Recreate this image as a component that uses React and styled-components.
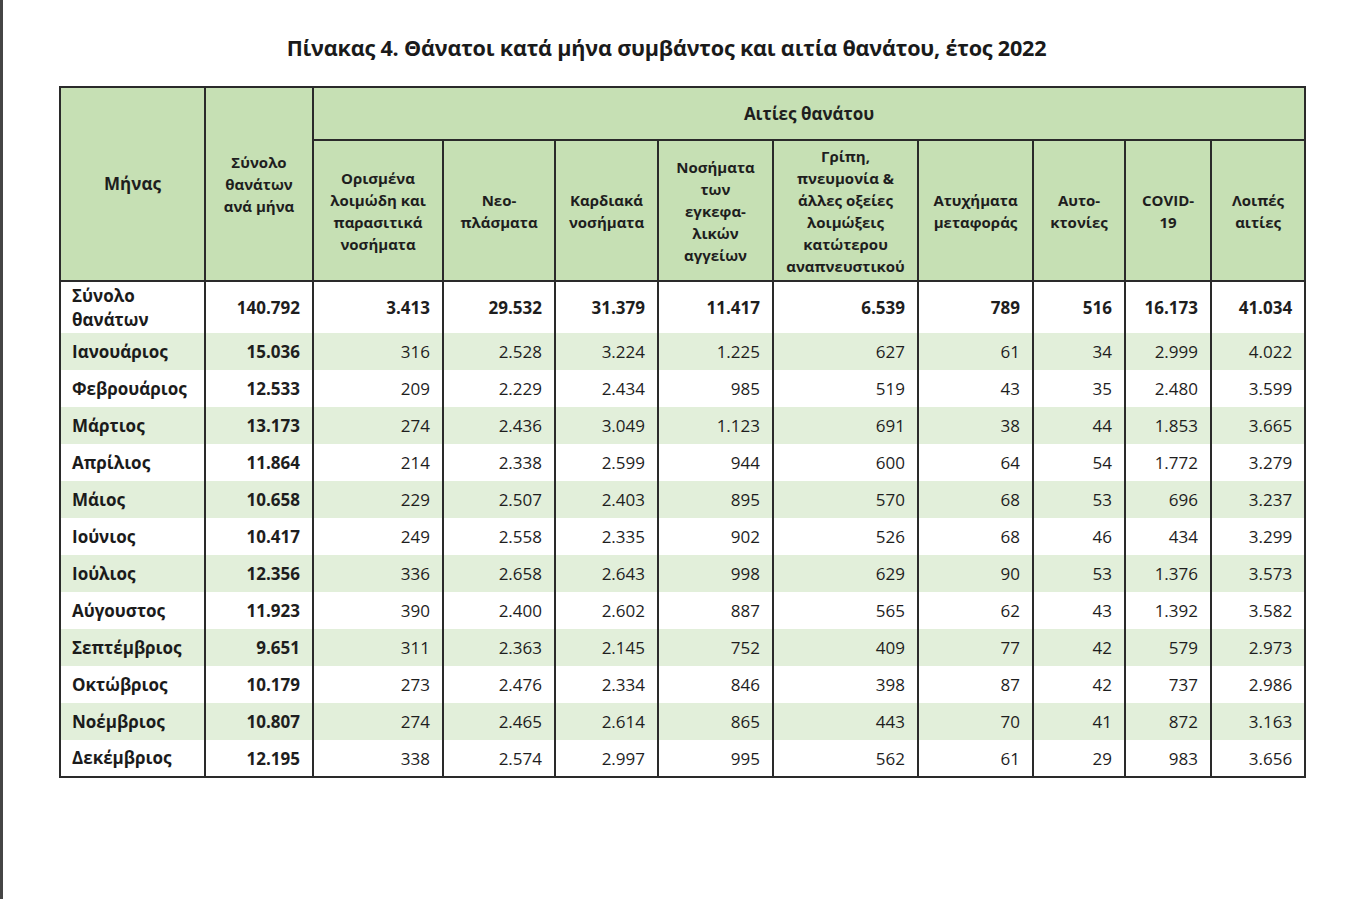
import styled, { createGlobalStyle } from 'styled-components';

const GlobalStyle = createGlobalStyle`
  html, body {
    margin: 0;
    padding: 0;
    background: #ffffff;
  }
  body {
    font-family: 'Open Sans', 'Noto Sans', 'DejaVu Sans', sans-serif;
    color: #1b1b1b;
  }
`;

const months = [
  ['Ιανουάριος', '15.036', '316', '2.528', '3.224', '1.225', '627', '61', '34', '2.999', '4.022'],
  ['Φεβρουάριος', '12.533', '209', '2.229', '2.434', '985', '519', '43', '35', '2.480', '3.599'],
  ['Μάρτιος', '13.173', '274', '2.436', '3.049', '1.123', '691', '38', '44', '1.853', '3.665'],
  ['Απρίλιος', '11.864', '214', '2.338', '2.599', '944', '600', '64', '54', '1.772', '3.279'],
  ['Μάιος', '10.658', '229', '2.507', '2.403', '895', '570', '68', '53', '696', '3.237'],
  ['Ιούνιος', '10.417', '249', '2.558', '2.335', '902', '526', '68', '46', '434', '3.299'],
  ['Ιούλιος', '12.356', '336', '2.658', '2.643', '998', '629', '90', '53', '1.376', '3.573'],
  ['Αύγουστος', '11.923', '390', '2.400', '2.602', '887', '565', '62', '43', '1.392', '3.582'],
  ['Σεπτέμβριος', '9.651', '311', '2.363', '2.145', '752', '409', '77', '42', '579', '2.973'],
  ['Οκτώβριος', '10.179', '273', '2.476', '2.334', '846', '398', '87', '42', '737', '2.986'],
  ['Νοέμβριος', '10.807', '274', '2.465', '2.614', '865', '443', '70', '41', '872', '3.163'],
  ['Δεκέμβριος', '12.195', '338', '2.574', '2.997', '995', '562', '61', '29', '983', '3.656'],
];

const totals = ['140.792', '3.413', '29.532', '31.379', '11.417', '6.539', '789', '516', '16.173', '41.034'];

const causes = [
  ['Ορισμένα', 'λοιμώδη και', 'παρασιτικά', 'νοσήματα'],
  ['Νεο-', 'πλάσματα'],
  ['Καρδιακά', 'νοσήματα'],
  ['Νοσήματα', 'των', 'εγκεφα-', 'λικών', 'αγγείων'],
  ['Γρίπη,', 'πνευμονία &', 'άλλες οξείες', 'λοιμώξεις', 'κατώτερου', 'αναπνευστικού'],
  ['Ατυχήματα', 'μεταφοράς'],
  ['Αυτο-', 'κτονίες'],
  ['COVID-', '19'],
  ['Λοιπές', 'αιτίες'],
];

const widths = [145, 108, 130, 112, 103, 115, 145, 115, 92, 86, 94];

const Page = styled.div`
  min-height: 899px;
  border-left: 3px solid #454545;
  box-sizing: border-box;
  padding-top: 33px;
`;

const Title = styled.h1`
  margin: 0 0 23px 0;
  padding-right: 30px;
  font-size: 21.6px;
  font-weight: 700;
  line-height: 30px;
  text-align: center;
  color: #1a1a1a;
  letter-spacing: -0.2px;
`;

const Table = styled.table`
  margin-left: 56px;
  width: 1245px;
  border-collapse: collapse;
  table-layout: fixed;
  border: 2px solid #2a2a2a;
`;

const HeadCell = styled.th`
  background: #c6e0b4;
  border: 2px solid #2a2a2a;
  font-size: ${(p) => (p.$big ? '17px' : '15px')};
  font-weight: 700;
  line-height: 22px;
  text-align: center;
  vertical-align: middle;
  padding: 0 4px;
  height: ${(p) => p.$h || 'auto'};
  color: #1e1e1e;
`;

const Row = styled.tr`
  background: ${(p) => (p.$shade ? '#e2efda' : '#ffffff')};
  height: ${(p) => p.$h}px;
`;

const Label = styled.td`
  border-left: 2px solid #2a2a2a;
  border-right: 2px solid #2a2a2a;
  font-size: 17px;
  font-weight: 700;
  line-height: 24px;
  padding: 0 11px;
  text-align: left;
  vertical-align: middle;
  white-space: nowrap;
`;

const Num = styled.td`
  border-left: 2px solid #2a2a2a;
  border-right: 2px solid #2a2a2a;
  font-size: 17px;
  font-weight: ${(p) => (p.$bold ? 700 : 400)};
  padding: 0 12px 0 0;
  text-align: right;
  vertical-align: middle;
  color: #1e1e1e;
`;

const Lines = ({ lines }) =>
  lines.map((l, i) => (
    <span key={i}>
      {l}
      {i < lines.length - 1 && <br />}
    </span>
  ));

export default function App() {
  return (
    <Page>
      <GlobalStyle />
      <Title>Πίνακας 4. Θάνατοι κατά μήνα συμβάντος και αιτία θανάτου, έτος 2022</Title>
      <Table>
        <colgroup>
          {widths.map((w, i) => (
            <col key={i} style={{ width: w }} />
          ))}
        </colgroup>
        <thead>
          <tr>
            <HeadCell rowSpan={2} $big>
              Μήνας
            </HeadCell>
            <HeadCell rowSpan={2}>
              <Lines lines={['Σύνολο', 'θανάτων', 'ανά μήνα']} />
            </HeadCell>
            <HeadCell colSpan={9} $h="51px" $big>
              Αιτίες θανάτου
            </HeadCell>
          </tr>
          <tr>
            {causes.map((c, i) => (
              <HeadCell key={i} $h="139px">
                <Lines lines={c} />
              </HeadCell>
            ))}
          </tr>
        </thead>
        <tbody>
          <Row $h={52}>
            <Label>
              Σύνολο
              <br />
              θανάτων
            </Label>
            {totals.map((v, i) => (
              <Num key={i} $bold>
                {v}
              </Num>
            ))}
          </Row>
          {months.map(([name, total, ...rest], r) => (
            <Row key={name} $h={37} $shade={r % 2 === 0}>
              <Label>{name}</Label>
              <Num $bold>{total}</Num>
              {rest.map((v, i) => (
                <Num key={i}>{v}</Num>
              ))}
            </Row>
          ))}
        </tbody>
      </Table>
    </Page>
  );
}
